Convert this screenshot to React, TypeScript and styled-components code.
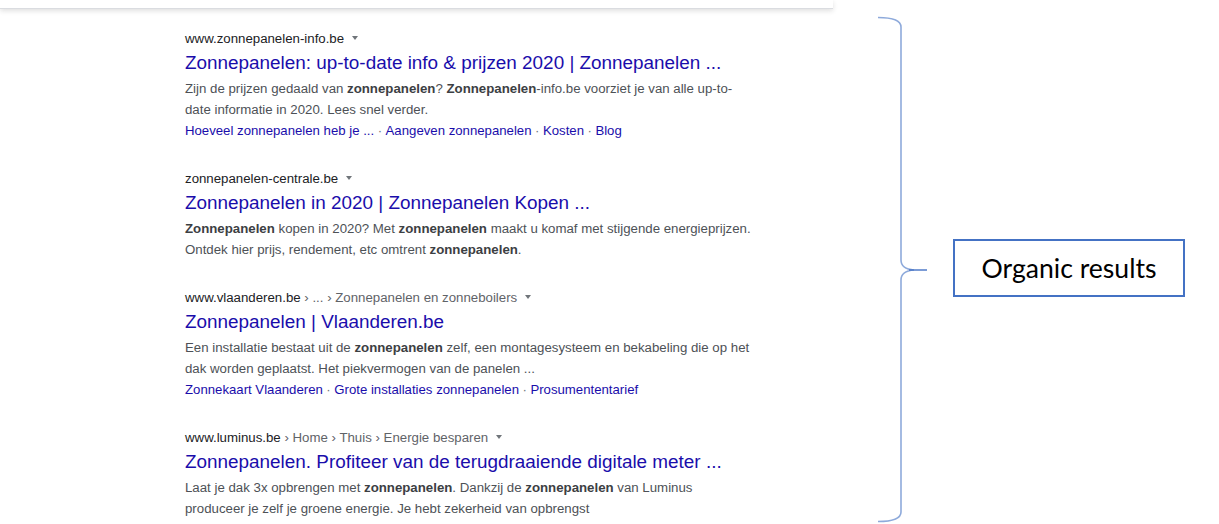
import React from "react";
import styled, { createGlobalStyle } from "styled-components";

const GlobalStyle = createGlobalStyle`
  html, body { margin: 0; padding: 0; background: #fff; }
  body { font-family: "Liberation Sans", Arial, sans-serif; }
`;

const Page = styled.div`
  display: flex;
  width: 1219px;
  height: 524px;
  overflow: hidden;
  background: #fff;
`;

const ResultsColumn = styled.div`
  width: 833px;
  flex: none;
  display: flex;
  flex-direction: column;
`;

const HeaderEdge = styled.div`
  height: 8px;
  background: #fff;
  border-bottom: 1px solid #dadce0;
  box-shadow: 0 2px 5px rgba(32, 33, 36, 0.14);
`;

const ResultsList = styled.div`
  display: flex;
  flex-direction: column;
  gap: 27px;
  padding: 19px 0 0 185px;
`;

const Result = styled.div`
  display: flex;
  flex-direction: column;
`;

const UrlRow = styled.div`
  display: flex;
  align-items: center;
  height: 20px;
  font-size: 13.25px;
  color: #202124;
  white-space: nowrap;
`;

const Crumbs = styled.span`
  color: #5f6368;
`;

const Caret = styled.span`
  display: inline-block;
  margin-left: 8px;
  width: 0;
  height: 0;
  border-left: 3.5px solid transparent;
  border-right: 3.5px solid transparent;
  border-top: 4.5px solid #70757a;
`;

const Title = styled.div`
  font-size: 18.9px;
  line-height: 30px;
  color: #1a0dab;
  white-space: nowrap;
`;

const Snippet = styled.div`
  font-size: 13.25px;
  line-height: 21px;
  color: #4d5156;
  width: 580px;

  b {
    color: #3c4043;
    font-weight: bold;
  }
`;

const Line = styled.div`
  white-space: nowrap;
`;

const Sitelinks = styled.div`
  font-size: 13.2px;
  line-height: 21px;
  color: #1a0dab;
  white-space: nowrap;
`;

const Sep = styled.span`
  color: #70757a;
  padding: 0 3.5px;
`;

const Annotation = styled.div`
  display: flex;
  align-items: center;
  margin-left: 43px;
`;

const BraceSvg = styled.svg`
  display: block;
  flex: none;
`;

const Label = styled.div`
  margin-left: 25px;
  margin-top: 12px;
  width: 228px;
  height: 54px;
  border: 2px solid #4472c4;
  display: flex;
  align-items: center;
  justify-content: center;
  font-family: Lato, "Open Sans", sans-serif;
  font-size: 26.6px;
  color: #000;
`;

type Res = {
  url: React.ReactNode;
  title: string;
  lines: React.ReactNode[];
  links?: string[];
};

const results: Res[] = [
  {
    url: <>www.zonnepanelen-info.be</>,
    title: "Zonnepanelen: up-to-date info & prijzen 2020 | Zonnepanelen ...",
    lines: [
      <>
        Zijn de prijzen gedaald van <b>zonnepanelen</b>? <b>Zonnepanelen</b>-info.be voorziet je van alle up-to-
      </>,
      <>date informatie in 2020. Lees snel verder.</>,
    ],
    links: ["Hoeveel zonnepanelen heb je ...", "Aangeven zonnepanelen", "Kosten", "Blog"],
  },
  {
    url: <>zonnepanelen-centrale.be</>,
    title: "Zonnepanelen in 2020 | Zonnepanelen Kopen ...",
    lines: [
      <>
        <b>Zonnepanelen</b> kopen in 2020? Met <b>zonnepanelen</b> maakt u komaf met stijgende energieprijzen.
      </>,
      <>
        Ontdek hier prijs, rendement, etc omtrent <b>zonnepanelen</b>.
      </>,
    ],
  },
  {
    url: (
      <>
        www.vlaanderen.be<Crumbs> › ... › Zonnepanelen en zonneboilers</Crumbs>
      </>
    ),
    title: "Zonnepanelen | Vlaanderen.be",
    lines: [
      <>
        Een installatie bestaat uit de <b>zonnepanelen</b> zelf, een montagesysteem en bekabeling die op het
      </>,
      <>dak worden geplaatst. Het piekvermogen van de panelen ...</>,
    ],
    links: ["Zonnekaart Vlaanderen", "Grote installaties zonnepanelen", "Prosumententarief"],
  },
  {
    url: (
      <>
        www.luminus.be<Crumbs> › Home › Thuis › Energie besparen</Crumbs>
      </>
    ),
    title: "Zonnepanelen. Profiteer van de terugdraaiende digitale meter ...",
    lines: [
      <>
        Laat je dak 3x opbrengen met <b>zonnepanelen</b>. Dankzij de <b>zonnepanelen</b> van Luminus
      </>,
      <>produceer je zelf je groene energie. Je hebt zekerheid van opbrengst</>,
    ],
  },
];

export default function App() {
  return (
    <>
      <GlobalStyle />
      <Page>
        <ResultsColumn>
          <HeaderEdge />
          <ResultsList>
            {results.map((r, i) => (
              <Result key={i}>
                <UrlRow>
                  <span>{r.url}</span>
                  <Caret />
                </UrlRow>
                <Title>{r.title}</Title>
                <Snippet>
                  {r.lines.map((l, j) => (
                    <Line key={j}>{l}</Line>
                  ))}
                </Snippet>
                {r.links && (
                  <Sitelinks>
                    {r.links.map((l, j) => (
                      <React.Fragment key={j}>
                        {j > 0 && <Sep>·</Sep>}
                        <span>{l}</span>
                      </React.Fragment>
                    ))}
                  </Sitelinks>
                )}
              </Result>
            ))}
          </ResultsList>
        </ResultsColumn>
        <Annotation>
          <BraceSvg width="52" height="524" viewBox="0 0 52 524">
            <path
              d="M2 17.5 Q25 17.5 25 27 L25 260 Q25 269 38 270 Q25 271 25 280 L25 512 Q25 521.5 2 521.5"
              fill="none"
              stroke="#8eaadb"
              strokeWidth="1.6"
            />
            <path d="M33 270 L51 270" stroke="#4472c4" strokeWidth="1.4" />
          </BraceSvg>
          <Label>Organic results</Label>
        </Annotation>
      </Page>
    </>
  );
}
